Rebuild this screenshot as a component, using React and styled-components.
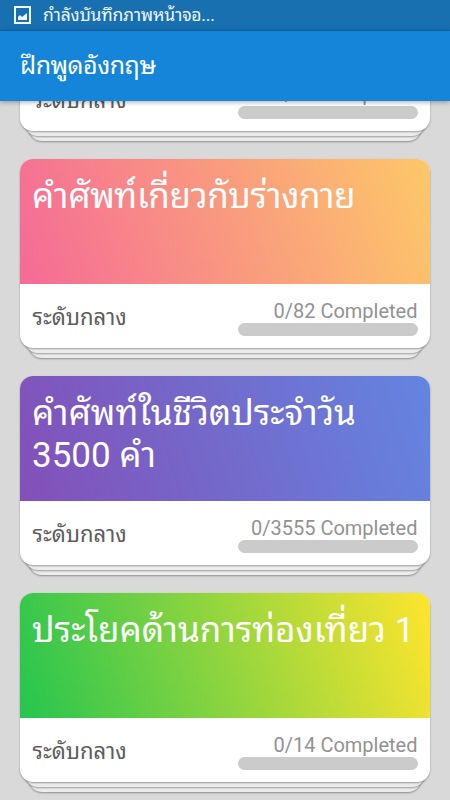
import React from 'react';
import styled, { createGlobalStyle } from 'styled-components';

const GlobalStyle = createGlobalStyle`
  * {
    box-sizing: border-box;
    margin: 0;
    padding: 0;
  }
  body {
    background: #d9d9d9;
    font-family: Roboto, 'Noto Sans Thai Looped', sans-serif;
  }
`;
const Screen = styled.div`
  display: flex;
  flex-direction: column;
  width: 450px;
  height: 800px;
  overflow: hidden;
  background: #d9d9d9;
`;
const StatusBar = styled.div`
  display: flex;
  align-items: center;
  flex: 0 0 31px;
  gap: 12px;
  padding: 0 14px;
  background: #1870b0;
  border-bottom: 1px solid #1668a5;
  color: #f1f6fa;
`;
const StatusText = styled.p`
  font-size: 17.5px;
  line-height: 29px;
  letter-spacing: -0.2px;
  white-space: nowrap;
`;
const AppBar = styled.header`
  display: flex;
  align-items: center;
  flex: 0 0 70px;
  padding: 0 20px;
  background: #1485d8;
  box-shadow: 0 1px 5px rgba(0, 0, 0, 0.35);
  z-index: 5;
`;
const AppTitle = styled.h1`
  font-size: 25px;
  font-weight: 400;
  line-height: 36px;
  letter-spacing: -0.5px;
  color: #ffffff;
  white-space: nowrap;
`;
const Scroller = styled.main`
  flex: 1;
  min-height: 0;
  overflow: hidden;
`;
const List = styled.div`
  display: flex;
  flex-direction: column;
  gap: 18px;
  padding: 0 20px;
  margin-top: -159px;
`;
const Stack = styled.div`
  display: flex;
  flex-direction: column;
  isolation: isolate;
  height: 199px;
`;
const Card = styled.article`
  flex: 0 0 189px;
  border-radius: 13px;
  overflow: hidden;
  background: #ffffff;
  box-shadow: 0 1px 2px rgba(0, 0, 0, 0.35);
  z-index: 3;
`;
const Sheet = styled.div`
  flex: 0 0 40px;
  margin: -35px ${props => props.$inset}px 0;
  border-radius: 13px;
  background: #ececec;
  box-shadow: 0 1px 2px rgba(0, 0, 0, 0.35);
  z-index: ${props => props.$level};
`;
const Cover = styled.div`
  height: 125px;
  padding: 17px 12px;
  background: linear-gradient(
    73deg,
    ${props => props.$from},
    ${props => props.$to}
  );
`;
const Title = styled.h2`
  font-size: 35px;
  font-weight: 400;
  line-height: 42px;
  letter-spacing: ${props => props.$spacing || 0}px;
  color: #ffffff;
  white-space: pre;
`;
const Footer = styled.div`
  display: flex;
  justify-content: space-between;
  height: 64px;
  padding: 15px 12.5px 0;
`;
const Level = styled.p`
  font-size: 22px;
  line-height: 37px;
  color: #5c5c5c;
`;
const Progress = styled.div`
  display: flex;
  flex-direction: column;
  align-items: flex-end;
`;
const Count = styled.p`
  font-size: 20px;
  line-height: 24px;
  color: #929292;
`;
const Track = styled.div`
  width: 180px;
  height: 12.5px;
  border-radius: 7px;
  background: #cbcbcb;
`;

const decks = [
  { title: '', done: 0, total: 50, from: '#36c3d8', to: '#5b86e5' },
  {
    title: 'คำศัพท์เกี่ยวกับร่างกาย',
    spacing: -0.35,
    done: 0,
    total: 82,
    from: '#f56a97',
    to: '#fdc868',
  },
  {
    title: 'คำศัพท์ในชีวิตประจำวัน\n3500 คำ',
    done: 0,
    total: 3555,
    from: '#8350b8',
    to: '#6385e0',
  },
  {
    title: 'ประโยคด้านการท่องเที่ยว 1',
    done: 0,
    total: 14,
    from: '#25c54f',
    to: '#ffe52d',
  },
];

const PictureIcon = () => (
  <svg width='17' height='18' viewBox='0 0 17 18'>
    <path
      fill='currentColor'
      fillRule='evenodd'
      d='M0 0h17v18H0zM2 2v14h13V2zM4 14v-3l2-2 2 2 5-4v7z'
    />
  </svg>
);

const Deck = ({ deck }) => (
  <Stack>
    <Card>
      <Cover $from={deck.from} $to={deck.to}>
        <Title $spacing={deck.spacing}>{deck.title}</Title>
      </Cover>
      <Footer>
        <Level>ระดับกลาง</Level>
        <Progress>
          <Count>
            {deck.done}/{deck.total} Completed
          </Count>
          <Track />
        </Progress>
      </Footer>
    </Card>
    <Sheet $inset={5} $level={2} />
    <Sheet $inset={9} $level={1} />
  </Stack>
);

const App = () => {
  return (
    <>
      <GlobalStyle />
      <Screen>
        <StatusBar>
          <PictureIcon />
          <StatusText>กำลังบันทึกภาพหน้าจอ...</StatusText>
        </StatusBar>
        <AppBar>
          <AppTitle>ฝึกพูดอังกฤษ</AppTitle>
        </AppBar>
        <Scroller>
          <List>
            {decks.map(deck => (
              <Deck key={deck.total} deck={deck} />
            ))}
          </List>
        </Scroller>
      </Screen>
    </>
  );
};

export default App;
